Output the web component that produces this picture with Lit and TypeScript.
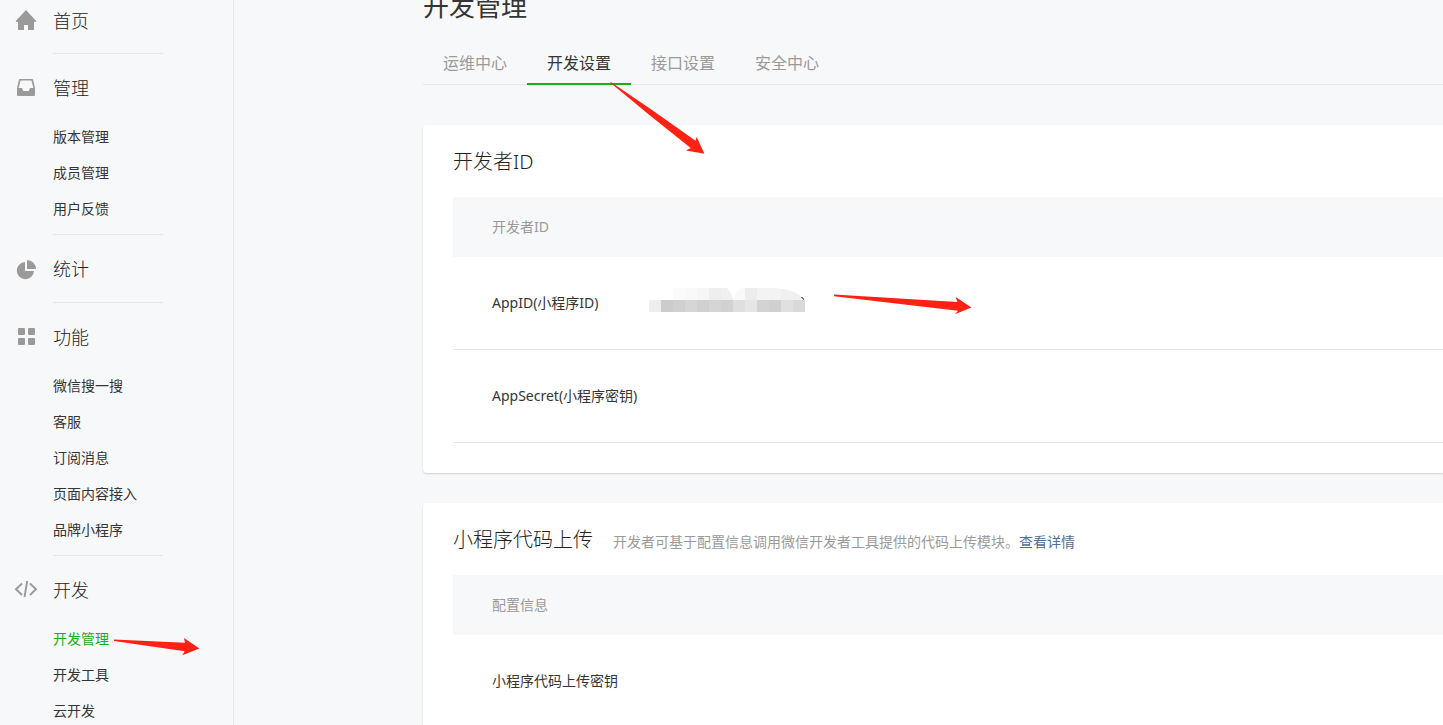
import { LitElement, html, svg, css } from "lit";
import { customElement, property } from "lit/decorators.js";

const icons: Record<string, unknown> = {
  home: svg`<path d="M12 1 22.400 12.200 21.600 13H20v7.400l-.6.6H14v-5h-4v5H4.600l-.6-.6V13H2.400l-.8-.8z"/>`,
  inbox: svg`<path fill-rule="evenodd" d="M5.600 3h12.800l.6.5L21 12v7.200l-.8.8H3.800l-.8-.8V12l2-8.500zM6.600 4.600 4.600 12H8l1.300 3h5.400L16 12h3.400L17.400 4.600z"/>`,
  pie: svg`<path d="M11 5A8.600 8.600 0 1 0 20 14H11z"/><path d="M13 3A9 9 0 0 1 22 12H13z"/>`,
  grid: svg`<rect x="4" y="3" width="7" height="7" rx="1"/><rect x="14" y="3" width="7" height="7" rx="1"/><rect x="4" y="13" width="7" height="7" rx="1"/><rect x="14" y="13" width="7" height="7" rx="1"/>`,
  code: svg`<path fill="none" stroke="#9a9a9a" stroke-width="1.900" d="M8 5.500 2 11.300 8 17M16 5.500l6 5.800L16 17M13.200 3 10.500 19"/>`,
};

interface Section { icon: string; title: string; items: string[]; }

const sections: Section[] = [
  { icon: "home", title: "首页", items: [] },
  { icon: "inbox", title: "管理", items: ["版本管理", "成员管理", "用户反馈"] },
  { icon: "pie", title: "统计", items: [] },
  { icon: "grid", title: "功能", items: ["微信搜一搜", "客服", "订阅消息", "页面内容接入", "品牌小程序"] },
  { icon: "code", title: "开发", items: ["开发管理", "开发工具", "云开发"] },
];

@customElement("side-nav")
class SideNav extends LitElement {
  @property() current = "";
  static styles = css`
    :host { display: block; }
    section { padding: 20px 0 0 15px; }
    section:first-child { padding-top: 7px; }
    .head { display: flex; align-items: center; gap: 15px; font-size: 18px; line-height: 28px; font-weight: 300; color: #222; text-decoration: none; }
    .head svg { width: 24px; height: 24px; margin-left: -1px; fill: #9a9a9a; flex: none; }
    .list { list-style: none; margin: 17px 0 0 38px; padding: 0 0 7px; }
    .list a { display: block; font-size: 14px; line-height: 36px; color: #353535; text-decoration: none; }
    .list a.on { color: #1aad19; }
    .line { width: 110px; height: 1px; margin-left: 38px; background: #e4e6e8; }
    .head + .line { margin-top: 19px; }
    section:first-child .line { margin-top: 18px; }
  `;
  render() {
    return html`<nav>
      ${sections.map((s) => html`<section>
        <a class="head" href="#"><svg viewBox="0 0 24 24" aria-hidden="true">${icons[s.icon]}</svg>${s.title}</a>
        ${s.items.length
          ? html`<ul class="list">${s.items.map((i) => html`<li><a href="#" class=${i === this.current ? "on" : ""}>${i}</a></li>`)}</ul>`
          : null}
        <div class="line"></div>
      </section>`)}
    </nav>`;
  }
}

const lower = ["eeeeee", "cccccc", "d0d0d0", "d6d6d6", "d0d0d0", "d5d5d5", "d1d1d1", "dfdfdf", "e6e6e6", "d3d3d3", "d0d0d0", "e0e0e0", "d9d9d9"];
const upper = ["fbfbfb", "f9f9f9", "f6f6f6", "eeeeee", "f0f0f0", "f9f9f9", "ededed", "f3f3f3", "f3f3f3", "f0f0f0", "f0f0f0"];

@customElement("masked-value")
class MaskedValue extends LitElement {
  static styles = css`
    :host { display: block; }
    svg { display: block; width: 158px; height: 30px; }
  `;
  render() {
    return html`<svg viewBox="0 0 158 30" aria-hidden="true">
      <defs><clipPath id="top"><path d="M24 0H78Q82 4 84 11Q86 4 92 0H127Q146 1 156 12H24z"/></clipPath></defs>
      <g clip-path="url(#top)" shape-rendering="crispEdges">${upper.map((c, i) => svg`<rect x=${24 + i * 12} y="0" width="12" height="12" fill="#${c}"/>`)}</g>
      <g shape-rendering="crispEdges">${lower.map((c, i) => svg`<rect x=${i * 12} y="12" width="12" height="12" fill="#${c}"/>`)}</g>
      <path d="M152 9h2v1h1v2h-1v-1h-1v-1h-1z" fill="#777"/>
    </svg>`;
  }
}

@customElement("app-root")
class AppRoot extends LitElement {
  static styles = css`
    :host {
      display: flex; position: relative; height: 100vh; overflow: hidden;
      background: #f7f8fa; color: #353535;
      font-family: "Noto Sans", "Noto Sans CJK SC", sans-serif; font-size: 14px;
    }
    side-nav { flex: none; width: 233px; border-right: 1px solid #e4e6e8; }
    main { flex: 1; min-width: 0; padding-left: 189px; }
    h1 { margin: -12px 0 0; font-size: 26px; line-height: 36px; font-weight: 400; }
    .tabs { display: flex; margin: 19px 0 40px; border-bottom: 1px solid #e4e6e8; }
    .tabs a { padding: 0 20px; height: 41px; margin-bottom: -1px; line-height: 40px; font-size: 16px; color: #9a9a9a; text-decoration: none; }
    .tabs a.on { height: 40px; color: #353535; border-bottom: 2px solid #1aad19; }
    .card { margin-bottom: 30px; padding: 22px 0 30px 30px; background: #fff; border-radius: 4px 0 0 4px; box-shadow: 0 1px 2px rgba(0, 0, 0, 0.16); }
    .title { display: flex; align-items: baseline; gap: 20px; margin-bottom: 20px; }
    h2 { margin: 0; font-size: 20px; line-height: 30px; font-weight: 300; color: #222; }
    .title p { margin: 0; color: #9a9a9a; }
    .title p a { color: #576b95; text-decoration: none; }
    table { width: 100%; border-collapse: separate; border-spacing: 0; table-layout: fixed; }
    .name { width: 196px; }
    th { box-sizing: border-box; text-align: left; font-weight: 400; padding: 0 0 2px 39px; white-space: nowrap; }
    thead th { height: 60px; background: #f6f8fa; color: #9a9a9a; }
    td { box-sizing: border-box; padding: 0; }
    tbody th, tbody td { height: 93px; border-bottom: 1px solid #e4e6e8; }
    .marks { position: absolute; left: 0; top: 0; width: 1000px; height: 725px; pointer-events: none; fill: #ff2113; }
  `;
  render() {
    return html`
      <side-nav current="开发管理"></side-nav>
      <main>
        <h1>开发管理</h1>
        <nav class="tabs">
          <a href="#">运维中心</a><a href="#" class="on">开发设置</a><a href="#">接口设置</a><a href="#">安全中心</a>
        </nav>
        <section class="card">
          <div class="title"><h2>开发者ID</h2></div>
          <table>
            <colgroup><col class="name" /><col /></colgroup>
            <thead><tr><th colspan="2">开发者ID</th></tr></thead>
            <tbody>
              <tr><th scope="row">AppID(小程序ID)</th><td><masked-value></masked-value></td></tr>
              <tr><th scope="row">AppSecret(小程序密钥)</th><td></td></tr>
            </tbody>
          </table>
        </section>
        <section class="card">
          <div class="title"><h2>小程序代码上传</h2><p>开发者可基于配置信息调用微信开发者工具提供的代码上传模块。<a href="#">查看详情</a></p></div>
          <table>
            <colgroup><col class="name" /><col /></colgroup>
            <thead><tr><th colspan="2">配置信息</th></tr></thead>
            <tbody><tr><th scope="row">小程序代码上传密钥</th><td></td></tr></tbody>
          </table>
        </section>
      </main>
      <svg class="marks" viewBox="0 0 1000 725" aria-hidden="true">
        <path d="M610.500 81.700 652 110 695.500 140.700 696.700 137 704.400 153.700 686 150.500 690.700 148 650 115.500 610.700 83z"/>
        <path d="M834 294.500 957.300 302 955.700 297 971.400 307.400 955 314.300 958 310.700 834 296.200z"/>
        <path d="M114 639.600 185 642.700 184 638 199.400 648.400 182.300 655.200 184.700 651.300 114 641z"/>
      </svg>`;
  }
}
